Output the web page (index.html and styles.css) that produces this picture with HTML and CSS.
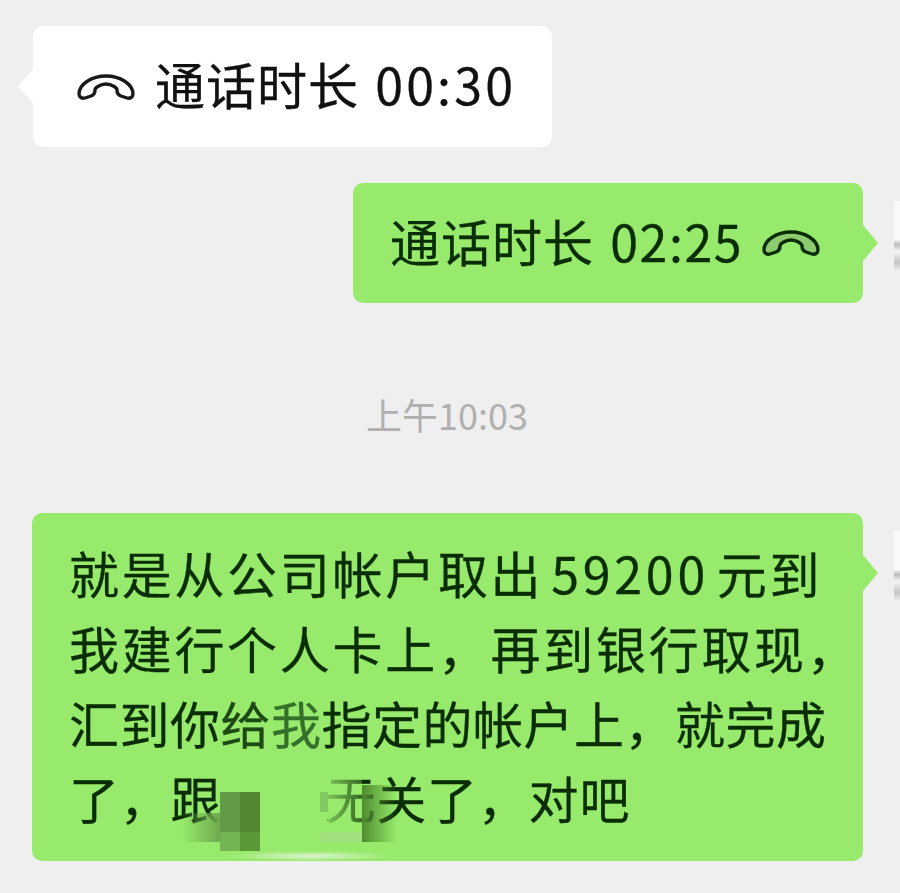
FILE: index.html
```html
<!DOCTYPE html>
<html lang="zh-CN">
<head>
<meta charset="utf-8">
<title>聊天记录</title>
<link rel="stylesheet" href="styles.css">
</head>
<body>
<main class="chat">
  <div class="bubble bubble-in call">
    <svg class="phone" viewBox="0 0 58 26"><path d="M2 20C2 10 15 2 29 2s27 8 27 18c0 3-3 5-6 4l-6-2c-3-1-4-3-4-6 0-2-5-6-11-6s-11 4-11 6c0 3-1 5-4 6l-6 2c-3 1-6-1-6-4z"/></svg>
    <span class="call-text">通话时长 <span class="num">00:30</span></span>
  </div>
  <div class="bubble bubble-out call call-out edge-top">
    <span class="call-text">通话时长 <span class="num num-tight">02:25</span></span>
    <svg class="phone phone-out" viewBox="0 0 58 26"><path d="M2 20C2 10 15 2 29 2s27 8 27 18c0 3-3 5-6 4l-6-2c-3-1-4-3-4-6 0-2-5-6-11-6s-11 4-11 6c0 3-1 5-4 6l-6 2c-3 1-6-1-6-4z"/></svg>
  </div>
  <div class="time">上午10:03</div>
  <div class="bubble bubble-out message edge-top">
    <p class="line wide first">就是从公司帐户取出 <span class="digits">59200</span> 元到</p>
    <p class="line wide">我建行个人卡上，再到银行取现，</p>
    <p class="line narrow">汇到你<span class="fade-a">给</span><span class="fade-b">我</span>指定的帐户上，就完成</p>
    <p class="line mid">了，跟<span class="hidden-name"></span>无关了，对吧</p>
    <div class="mosaic">
      <i class="m m1"></i><i class="m m2"></i><i class="m m3"></i><i class="m m4"></i>
      <i class="m m5"></i><i class="m m6"></i><i class="m m7"></i><i class="m m8"></i>
      <i class="m m9"></i><i class="m m10"></i><i class="m m11"></i>
    </div>
  </div>
</main>
</body>
</html>
```

FILE: styles.css
```css
* { box-sizing: border-box; }
html, body { margin: 0; height: 100%; }
body {
  background: #efefef;
  font-family: "Noto Sans CJK SC", "Noto Sans", sans-serif;
  color: #111;
  overflow: hidden;
}
.chat {
  display: flex;
  flex-direction: column;
  padding-top: 26px;
  height: 893px;
}
.bubble {
  position: relative;
  border-radius: 10px;
  font-size: 50px;
  line-height: 75px;
  -webkit-text-stroke: 0.3px currentColor;
}
.bubble::after {
  content: "";
  position: absolute;
  width: 0;
  height: 0;
  border-style: solid;
}
.bubble-in {
  background: #fff;
  align-self: flex-start;
  margin-left: 33px;
  width: 519px;
}
.bubble-in::after {
  left: -15px;
  top: 43px;
  border-width: 17px 15px 17px 0;
  border-color: transparent #fff transparent transparent;
}
.bubble-out {
  background: #97ea6c;
  color: #0a2d06;
  align-self: flex-end;
  margin-right: 37px;
}
.bubble-out::after {
  right: -15px;
  top: 42px;
  border-width: 18px 0 18px 15px;
  border-color: transparent transparent transparent #97ea6c;
}
.edge-top::before {
  content: "";
  position: absolute;
  right: -37px;
  top: 18px;
  width: 6px;
  height: 70px;
  background: linear-gradient(180deg, #fafafa 0 55%, #bdbdbd 62%, #f4f4f4 72%, #c4c4c4 88%, #f0f0f0 100%);
}
.call {
  display: flex;
  align-items: center;
  height: 121px;
  padding-left: 44px;
  gap: 20px;
}
.call-text {
  letter-spacing: 1px;
  word-spacing: 4px;
  padding-bottom: 6px;
}
.call-out {
  width: 510px;
  height: 120px;
  margin-top: 36px;
  padding-left: 37px;
  gap: 19px;
}
.num { letter-spacing: 3.2px; }
.num-tight { letter-spacing: 1.6px; }
.phone {
  width: 58px;
  height: 26px;
  flex: none;
  overflow: visible;
}
.phone path {
  fill: none;
  stroke: #1a1a1a;
  stroke-width: 3.4;
  stroke-linejoin: round;
}
.phone-out path {
  fill: #8ecb70;
  stroke: #0a2d06;
}
.time {
  margin-top: 85px;
  margin-right: 6px;
  align-self: center;
  font-size: 36px;
  line-height: 52px;
  color: #b0b0b0;
}
.message {
  width: 831px;
  height: 348px;
  margin-top: 73px;
  padding: 22px 0 0 37px;
}
.line {
  margin: 0;
  height: 75px;
  white-space: nowrap;
}
.wide { letter-spacing: 2.7px; }
.narrow { letter-spacing: 0.5px; }
.mid { letter-spacing: 0.8px; }
.first { word-spacing: -6px; }
.digits { letter-spacing: 3.8px; }
.fade-a { color: #1d4a14; }
.fade-b { color: #35702a; }
.hidden-name {
  display: inline-block;
  width: 104px;
}
.mosaic {
  position: absolute;
  inset: 0;
  pointer-events: none;
}
.m {
  position: absolute;
  display: block;
}
.m1 { left: 188px; top: 279px; width: 20px; height: 40px; background: #639a48; }
.m2 { left: 208px; top: 279px; width: 20px; height: 40px; background: #52882f; }
.m3 { left: 188px; top: 319px; width: 20px; height: 19px; background: #74b553; }
.m4 { left: 208px; top: 319px; width: 20px; height: 19px; background: #599a36; }
.m5 { left: 228px; top: 262px; width: 60px; height: 76px; background: #97ea6c; }
.m6 { left: 288px; top: 279px; width: 8px; height: 20px; background: #82c860; }
.m7 { left: 288px; top: 319px; width: 42px; height: 10px; background: #a0e07e; }
.m8 { left: 330px; top: 272px; width: 35px; height: 57px; background: linear-gradient(90deg, #4f8c30, rgba(151, 234, 108, 0)); }
.m9 { left: 150px; top: 300px; width: 38px; height: 29px; background: linear-gradient(90deg, rgba(151, 234, 108, 0), #6fa94f); }
.m10 { left: 296px; top: 262px; width: 34px; height: 57px; background: linear-gradient(90deg, rgba(151, 234, 108, 0.8), rgba(151, 234, 108, 0.3)); }
.m11 { left: 195px; top: 338px; width: 165px; height: 10px; background: radial-gradient(ellipse at center, rgba(235, 245, 228, 0.85), rgba(151, 234, 108, 0) 72%); }
```
